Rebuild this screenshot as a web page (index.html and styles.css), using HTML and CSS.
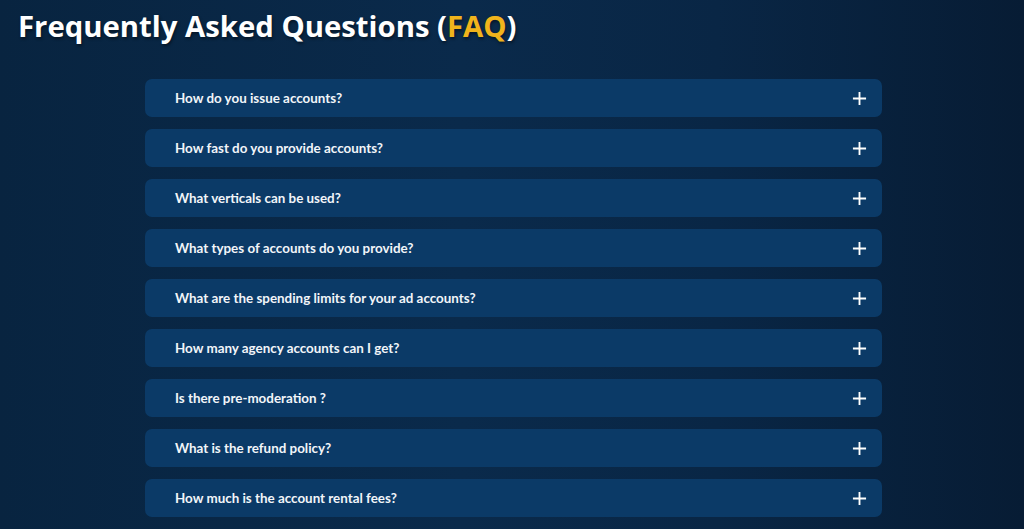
FILE: index.html
```html
<!DOCTYPE html>
<html lang="en">
<head>
<meta charset="utf-8">
<title>FAQ</title>
<link rel="stylesheet" href="styles.css">
</head>
<body>
<section class="faq">
  <h1 class="faq-title">Frequently Asked Questions (<span class="accent">FAQ</span>)</h1>
  <div class="faq-list">
    <div class="faq-item"><span class="q">How do you issue accounts?</span><svg class="plus" viewBox="0 0 16 16"><path d="M8 1v14M1 8h14"/></svg></div>
    <div class="faq-item"><span class="q">How fast do you provide accounts?</span><svg class="plus" viewBox="0 0 16 16"><path d="M8 1v14M1 8h14"/></svg></div>
    <div class="faq-item"><span class="q">What verticals can be used?</span><svg class="plus" viewBox="0 0 16 16"><path d="M8 1v14M1 8h14"/></svg></div>
    <div class="faq-item"><span class="q">What types of accounts do you provide?</span><svg class="plus" viewBox="0 0 16 16"><path d="M8 1v14M1 8h14"/></svg></div>
    <div class="faq-item"><span class="q">What are the spending limits for your ad accounts?</span><svg class="plus" viewBox="0 0 16 16"><path d="M8 1v14M1 8h14"/></svg></div>
    <div class="faq-item"><span class="q">How many agency accounts can I get?</span><svg class="plus" viewBox="0 0 16 16"><path d="M8 1v14M1 8h14"/></svg></div>
    <div class="faq-item"><span class="q">Is there pre-moderation ?</span><svg class="plus" viewBox="0 0 16 16"><path d="M8 1v14M1 8h14"/></svg></div>
    <div class="faq-item"><span class="q">What is the refund policy?</span><svg class="plus" viewBox="0 0 16 16"><path d="M8 1v14M1 8h14"/></svg></div>
    <div class="faq-item"><span class="q">How much is the account rental fees?</span><svg class="plus" viewBox="0 0 16 16"><path d="M8 1v14M1 8h14"/></svg></div>
  </div>
</section>
</body>
</html>
```
FILE: styles.css
```css
html, body {
  margin: 0;
  padding: 0;
  height: 100%;
}
body {
  background: linear-gradient(90deg, #082440 0%, #0a2a4b 45%, #092645 70%, #071c34 100%);
  font-family: "Open Sans", "Liberation Sans", sans-serif;
  overflow: hidden;
}
.faq {
  padding: 6px 0 0 18px;
}
.faq-title {
  margin: 0;
  color: #ffffff;
  font-family: "Open Sans", sans-serif;
  font-weight: 700;
  font-size: 29.3px;
  line-height: 40px;
  text-shadow: 1px 2px 3px rgba(0, 0, 0, 0.45);
}
.accent {
  color: #f0b41c;
}
.faq-list {
  display: flex;
  flex-direction: column;
  gap: 12px;
  width: 737px;
  margin: 33px 0 0 127px;
}
.faq-item {
  display: flex;
  align-items: center;
  justify-content: space-between;
  height: 38px;
  padding: 0 15px 0 30px;
  border-radius: 7px;
  background: #0b3a67;
  box-sizing: border-box;
}
.q {
  color: #f2f5f9;
  font-family: "Lato", sans-serif;
  font-weight: 700;
  font-size: 13.4px;
}
.plus {
  width: 15px;
  height: 15px;
  stroke: #ffffff;
  stroke-width: 2;
  fill: none;
}
```
